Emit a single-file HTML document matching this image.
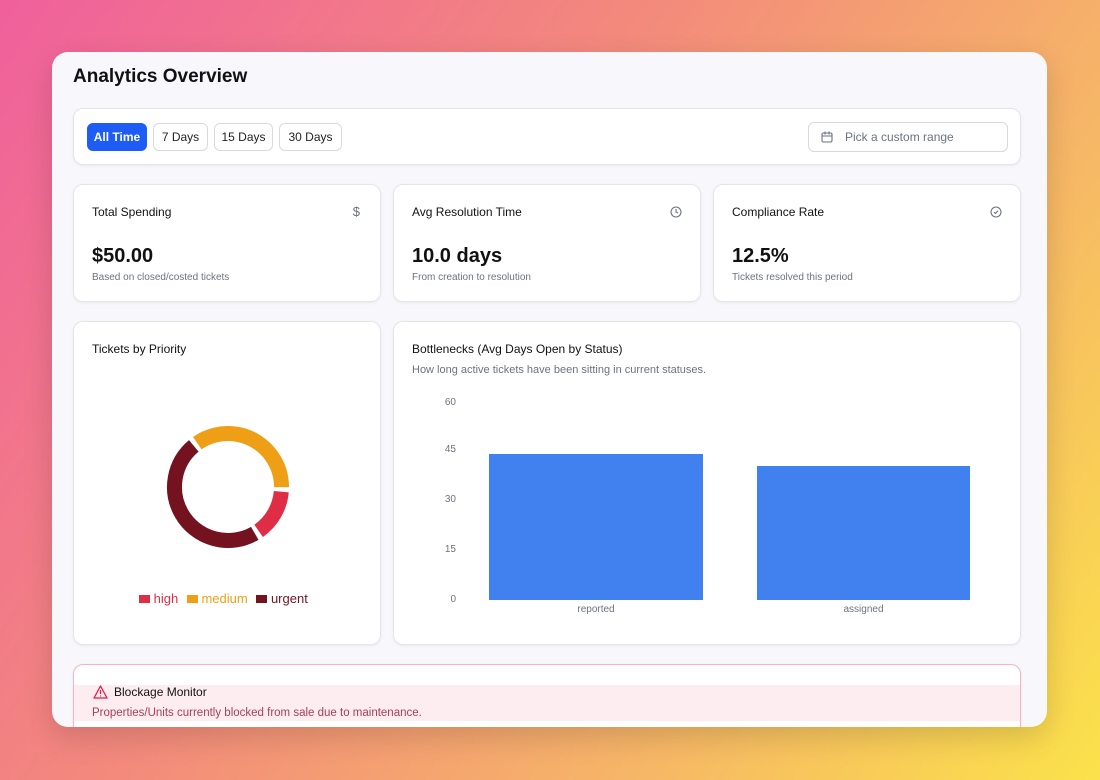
<!DOCTYPE html>
<html><head><meta charset="utf-8"><style>
*{box-sizing:border-box;margin:0;padding:0}
body{width:1100px;height:780px;overflow:hidden;font-family:"Liberation Sans",sans-serif;color:#0f172a;
background:linear-gradient(125deg,#f0609c 0%,#f38a7c 40%,#f6b468 70%,#fbe24a 100%);position:relative}
.win{position:absolute;left:52px;top:52px;width:995px;height:675px;background:#f8f8fc;border-radius:16px;overflow:hidden;box-shadow:0 10px 30px rgba(0,0,0,.15)}
.card{position:absolute;background:#fff;border:1px solid #e4e4ea;border-radius:10px;box-shadow:0 1px 3px rgba(0,0,0,.06)}
.abs{position:absolute}
h1{position:absolute;left:21px;top:14px;font-size:19px;font-weight:700;color:#111}
.btn{position:absolute;top:14px;height:28px;border:1px solid #d8d8e0;border-radius:6px;font-size:12px;line-height:26px;text-align:center;background:#fff;color:#222}
.t{font-size:12px;color:#111}
.big{font-size:20px;font-weight:700;color:#111}
.sub{font-size:10px;color:#6b7280}
.ax{position:absolute;font-size:10px;color:#6b7280;text-align:right;width:20px}
</style></head><body>
<div class="win">
<h1>Analytics Overview</h1>
<div class="card" style="left:21px;top:56px;width:948px;height:57px">
 <div class="btn" style="left:13px;width:60px;background:#1d5cf5;border-color:#1d5cf5;color:#fff;font-weight:700">All Time</div>
 <div class="btn" style="left:79px;width:55px">7 Days</div>
 <div class="btn" style="left:140px;width:59px">15 Days</div>
 <div class="btn" style="left:205px;width:63px">30 Days</div>
 <div class="btn" style="left:734px;width:200px;top:13px;height:30px;line-height:28px;text-align:left;padding-left:36px;color:#6b7280">Pick a custom range
  <svg class="abs" style="left:12px;top:8px" width="12" height="12" viewBox="0 0 12 12" fill="none" stroke="#6b7280" stroke-width="1.1"><rect x="1" y="2" width="10" height="9" rx="1.5"/><path d="M1 5h10M4 0.5v3M8 0.5v3"/></svg>
 </div>
</div>
<div class="card" style="left:21px;top:132px;width:308px;height:118px">
 <div class="abs t" style="left:18px;top:20px">Total Spending</div>
 <div class="abs" style="right:20px;top:19px;font-size:13px;color:#6b7280">$</div>
 <div class="abs big" style="left:18px;top:60px">$50.00</div>
 <div class="abs sub" style="left:18px;top:87px">Based on closed/costed tickets</div>
</div>
<div class="card" style="left:341px;top:132px;width:308px;height:118px">
 <div class="abs t" style="left:18px;top:20px">Avg Resolution Time</div>
 <svg class="abs" style="right:18px;top:21px" width="12" height="12" viewBox="0 0 12 12" fill="none" stroke="#6b7280" stroke-width="1.1"><circle cx="6" cy="6" r="5"/><path d="M6 3v3l2 1"/></svg>
 <div class="abs big" style="left:18px;top:60px">10.0 days</div>
 <div class="abs sub" style="left:18px;top:87px">From creation to resolution</div>
</div>
<div class="card" style="left:661px;top:132px;width:308px;height:118px">
 <div class="abs t" style="left:18px;top:20px">Compliance Rate</div>
 <svg class="abs" style="right:18px;top:21px" width="12" height="12" viewBox="0 0 12 12" fill="none" stroke="#6b7280" stroke-width="1.1"><circle cx="6" cy="6" r="5"/><path d="M4 6.2l1.4 1.3L8 4.7"/></svg>
 <div class="abs big" style="left:18px;top:60px">12.5%</div>
 <div class="abs sub" style="left:18px;top:87px">Tickets resolved this period</div>
</div>
<div class="card" style="left:21px;top:269px;width:308px;height:324px">
 <div class="abs t" style="left:18px;top:20px">Tickets by Priority</div>
 <svg class="abs" style="left:0;top:0" width="308" height="324">
  <g transform="translate(154,165)" fill="none" stroke-width="15">
   <circle r="53.5" stroke="#ef9f16" stroke-dasharray="116.7 400" transform="rotate(-125)"/>
   <circle r="53.5" stroke="#e02d46" stroke-dasharray="46.7 400" transform="rotate(5)"/>
   <circle r="53.5" stroke="#741220" stroke-dasharray="158.8 400" transform="rotate(60)"/>
  </g>
 </svg>
 <div class="abs" style="left:65px;top:269px;font-size:13px;white-space:nowrap">
  <span style="display:inline-block;width:11px;height:8px;background:#e02d46"></span> <span style="color:#e02d46">high</span>
  <span style="display:inline-block;width:11px;height:8px;background:#ef9f16;margin-left:5px"></span> <span style="color:#ef9f16">medium</span>
  <span style="display:inline-block;width:11px;height:8px;background:#741220;margin-left:5px"></span> <span style="color:#741220">urgent</span>
 </div>
</div>
<div class="card" style="left:341px;top:269px;width:628px;height:324px">
 <div class="abs t" style="left:18px;top:20px">Bottlenecks (Avg Days Open by Status)</div>
 <div class="abs" style="left:18px;top:42px;font-size:11px;color:#6b7280">How long active tickets have been sitting in current statuses.</div>
 <div class="ax" style="left:42px;top:75px">60</div>
 <div class="ax" style="left:42px;top:122px">45</div>
 <div class="ax" style="left:42px;top:172px">30</div>
 <div class="ax" style="left:42px;top:222px">15</div>
 <div class="ax" style="left:42px;top:272px">0</div>
 <div class="abs" style="left:95px;top:132px;width:214px;height:146px;background:#4180ef"></div>
 <div class="abs" style="left:363px;top:144px;width:213px;height:134px;background:#4180ef"></div>
 <div class="abs sub" style="left:95px;top:282px;width:214px;text-align:center">reported</div>
 <div class="abs sub" style="left:363px;top:282px;width:213px;text-align:center">assigned</div>
</div>
<div class="card" style="left:21px;top:612px;width:948px;height:100px;border-color:#f7b3c3">
 <div class="abs" style="left:0;top:20px;width:946px;height:36px;background:#fdecf0"></div>
 <svg class="abs" style="left:19px;top:20px" width="15" height="14" viewBox="0 0 15 14" fill="none" stroke="#e11d48" stroke-width="1.3"><path d="M7.5 1L14 13H1z" stroke-linejoin="round"/><path d="M7.5 5v4M7.5 10.5v1"/></svg>
 <div class="abs t" style="left:40px;top:20px;font-size:12px">Blockage Monitor</div>
 <div class="abs" style="left:18px;top:42px;font-size:11.5px;color:#a3405f">Properties/Units currently blocked from sale due to maintenance.</div>
</div>
</div>
</body></html>
